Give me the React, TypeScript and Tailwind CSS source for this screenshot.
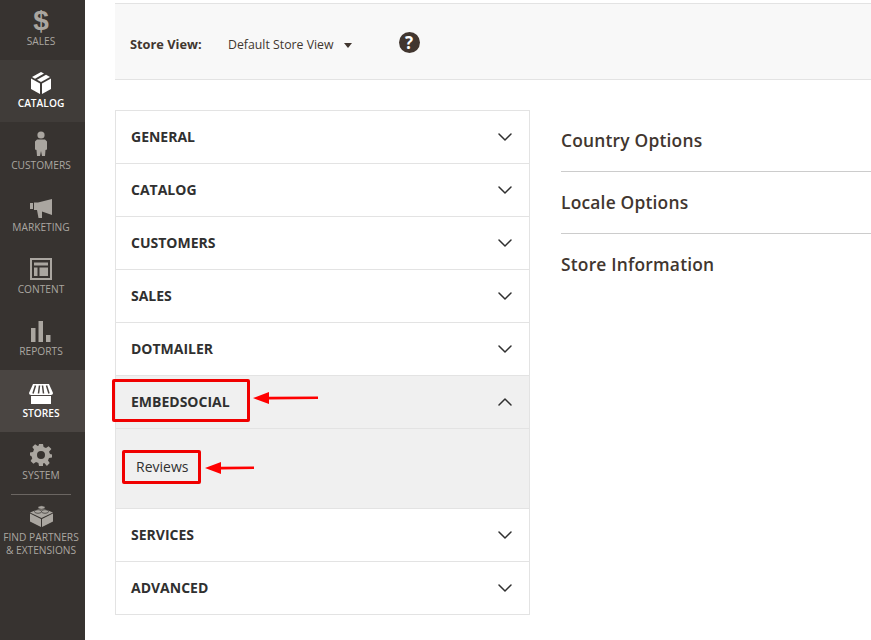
import { ChevronDown, ChevronUp } from "lucide-react";

const font = { fontFamily: '"Open Sans", sans-serif' };

function SalesIcon() {
  return (
    <div className="text-[28px] leading-none font-bold text-[#aaa6a0] -mb-[3px]" style={{ fontFamily: '"Liberation Sans", sans-serif' }}>$</div>
  );
}

function CatalogIcon() {
  return (
    <svg width="20" height="22" viewBox="0 0 20 22" fill="#fff">
      <path d="M10 0 1 5l3 1.700L13 1.600Z" />
      <path d="M15 2.700 6 7.800 10 10l9-5Z" />
      <path d="M0 6.500 9 11.500V22L0 17Z" />
      <path d="M20 6.500V17l-9 5V11.500Z" />
    </svg>
  );
}

function CustomersIcon() {
  return (
    <svg width="12" height="25" viewBox="0 0 12 25" fill="#aaa6a0">
      <circle cx="6" cy="4" r="3.600" />
      <path d="M2 8.500h8l2 2v8l-1.500.5-.5 6H7l-1-5-1 5H2l-.5-6L0 18.500v-8Z" />
    </svg>
  );
}

function MarketingIcon() {
  return (
    <svg width="23" height="19" viewBox="0 0 23 19" fill="#aaa6a0">
      <path d="M0 4h3v6H0Z" />
      <path d="M4 3.500h4L22 0v16L12 12.500V19H8.500L7 11H4Z" />
    </svg>
  );
}

function ContentIcon() {
  return (
    <svg width="22" height="22" viewBox="0 0 22 22" fill="none">
      <rect x="1" y="1" width="20" height="20" stroke="#aaa6a0" strokeWidth="2" />
      <path d="M4 4.500h14v3H4ZM4 9.500h3.500V18H4ZM9.500 9.500H18V18H9.500Z" fill="#aaa6a0" />
    </svg>
  );
}

function ReportsIcon() {
  return (
    <svg width="20" height="21" viewBox="0 0 20 21" fill="#aaa6a0">
      <path d="M0 7h4.500v14H0ZM7.500 0H12v21H7.500ZM15 14h4.500v7H15Z" />
    </svg>
  );
}

function StoresIcon() {
  return (
    <svg width="24" height="20" viewBox="0 0 24 20" fill="#fff">
      <path d="M4 0h16l4 9c0 1.300-1 2-2 2H2c-1 0-2-.7-2-2Z" />
      <path d="M2 12h20v8H2Z" />
      <path d="M6.500 1.500 4 9.500M10.500 1.500 9.500 9.500M13.500 1.500l1 8M17.500 1.500l2.500 8" stroke="#4a4542" strokeWidth="1.500" fill="none" />
    </svg>
  );
}

function SystemIcon() {
  return (
    <svg width="22" height="22" viewBox="0 0 22 22" fill="#aaa6a0">
      <path
        fillRule="evenodd"
        d="M9 0h4l.6 3 2.400 1 2.600-1.700 2.800 2.800L19 7.700l1 2.400 2 .4v3l-3 .6-1 2.400 1.700 2.600-2.800 2.800L14.300 19l-1.300.500L13 22H9l-.6-3-2.400-1-2.600 1.700-2.800-2.800L2.300 14.300l-1-2.300-1.300-.500v-3l3-.6 1-2.400L2.300 3.100l2.800-2.800L7.700 2l1-.4ZM11 7a4 4 0 1 0 0 8 4 4 0 0 0 0-8Z"
      />
    </svg>
  );
}

function PartnersIcon() {
  return (
    <svg width="23" height="22" viewBox="0 0 23 22" fill="#aaa6a0">
      <path d="M0 8.500 11 14v8L0 16.500Z" />
      <path d="M23 8.500v8L12 22v-8Z" />
      <path d="M11.500 3 23 7.600 11.500 13 0 7.600Z" />
      <ellipse cx="8" cy="6.500" rx="3.500" ry="1.800" stroke="#373330" strokeWidth=".7" />
      <ellipse cx="15" cy="6.500" rx="3.500" ry="1.800" stroke="#373330" strokeWidth=".7" />
      <ellipse cx="11.500" cy="2.500" rx="3.500" ry="1.800" stroke="#373330" strokeWidth=".7" />
    </svg>
  );
}

const nav = [
  { label: "SALES", icon: <SalesIcon /> },
  { label: "CATALOG", icon: <CatalogIcon />, state: "hover" },
  { label: "CUSTOMERS", icon: <CustomersIcon /> },
  { label: "MARKETING", icon: <MarketingIcon /> },
  { label: "CONTENT", icon: <ContentIcon /> },
  { label: "REPORTS", icon: <ReportsIcon /> },
  { label: "STORES", icon: <StoresIcon />, state: "active" },
  { label: "SYSTEM", icon: <SystemIcon /> },
];

function Sidebar() {
  return (
    <aside className="w-[85px] shrink-0 bg-[#373330] pr-[3px] overflow-hidden">
      {nav.map((item, i) => (
        <div
          key={item.label}
          className={`${i === 0 ? "h-[60px]" : "h-[62px]"} -mr-[3px] pr-[3px] flex flex-col items-center justify-end pb-[12px] ${
            item.state === "active" ? "bg-[#4a4542] text-white" : item.state === "hover" ? "bg-[#403c39] text-white" : "text-[#aaa6a0]"
          }`}
        >
          <div className="flex items-end justify-center mb-[2px]">{item.icon}</div>
          <div className={`text-[10.200px] leading-[14px] ${item.state ? "font-semibold" : ""}`}>{item.label}</div>
        </div>
      ))}
      <div className="mx-[11px] border-t border-[#6b6662]" />
      <div className="flex flex-col items-center text-[#aaa6a0] pt-[10px]">
        <PartnersIcon />
        <div className="text-[10.200px] leading-[13px] mt-[4px] text-center whitespace-nowrap">
          FIND PARTNERS
          <br />& EXTENSIONS
        </div>
      </div>
    </aside>
  );
}

const sections = ["GENERAL", "CATALOG", "CUSTOMERS", "SALES", "DOTMAILER"];
const after = ["SERVICES", "ADVANCED"];

function Row({ title, open }: { title: string; open?: boolean }) {
  return (
    <div className={`h-[53px] flex items-center justify-between pl-[15px] pr-[12px] border-b border-[#e3e3e3] ${open ? "bg-[#f0f0f0]" : "bg-white"}`}>
      <span className="text-[14px] font-bold text-[#303030] -mt-[2px]">{title}</span>
      {open ? <ChevronUp size={24} color="#303030" strokeWidth={1.5} /> : <ChevronDown size={24} color="#303030" strokeWidth={1.5} />}
    </div>
  );
}

function Arrow({ width, className }: { width: number; className: string }) {
  return (
    <svg className={`absolute ${className}`} width={width} height="14" viewBox={`0 0 ${width} 14`} fill="#ff0000">
      <path d={`M0 7 16 1v4.800L${width} 5.500v2.500L16 8.500V13Z`} />
    </svg>
  );
}

export default function App() {
  return (
    <div className="relative w-[871px] h-[640px] overflow-hidden flex bg-white" style={font}>
      <Sidebar />
      <main className="flex-1 pl-[30px] pt-[3px]">
        <div className="h-[77px] flex items-center pl-[15px] pt-[7px] bg-[#f8f8f8] border-y border-[#e3e3e3]">
          <span className="text-[12.800px] font-bold text-[#41362f] w-[98px]">Store View:</span>
          <span className="text-[12.300px] text-[#41362f]">Default Store View</span>
          <span className="ml-[10px] mt-[1px] w-0 h-0 border-x-[4px] border-x-transparent border-t-[5px] border-t-[#41362f]" />
          <span className="ml-[47px] -mt-[6px] w-[21px] h-[21px] rounded-full bg-[#41362f] text-white flex items-center justify-center text-[17px] font-bold leading-none">?</span>
        </div>
        <div className="flex mt-[30px]">
          <div className="w-[415px] border border-[#e3e3e3] border-b-0 shrink-0 self-start">
            {sections.map((s) => (
              <Row key={s} title={s} />
            ))}
            <Row title="EMBEDSOCIAL" open />
            <div className="h-[80px] bg-[#f0f0f0] border-b border-[#e3e3e3] pl-[20px] pt-[28px] text-[14px] leading-[20px] text-[#303030]">Reviews</div>
            {after.map((s) => (
              <Row key={s} title={s} />
            ))}
          </div>
          <div className="flex-1 pl-[31px]">
            <div className="h-[62px] flex items-center border-b border-[#cccccc] text-[17.400px] font-semibold text-[#41362f] tracking-[0.2px]">Country Options</div>
            <div className="h-[62px] flex items-center border-b border-[#cccccc] text-[17.400px] font-semibold text-[#41362f] tracking-[0.2px]">Locale Options</div>
            <div className="h-[60px] flex items-center text-[17.400px] font-semibold text-[#41362f] tracking-[0.2px]">Store Information</div>
          </div>
        </div>
      </main>
      <div className="absolute left-[112px] top-[379px] w-[138px] h-[43px] border-[3px] border-[#f00000] rounded-[2px]" />
      <div className="absolute left-[122px] top-[450px] w-[79px] h-[34px] border-[3px] border-[#f00000] rounded-[2px]" />
      <Arrow width={65} className="left-[253px] top-[391px]" />
      <Arrow width={49} className="left-[205px] top-[461px]" />
    </div>
  );
}
